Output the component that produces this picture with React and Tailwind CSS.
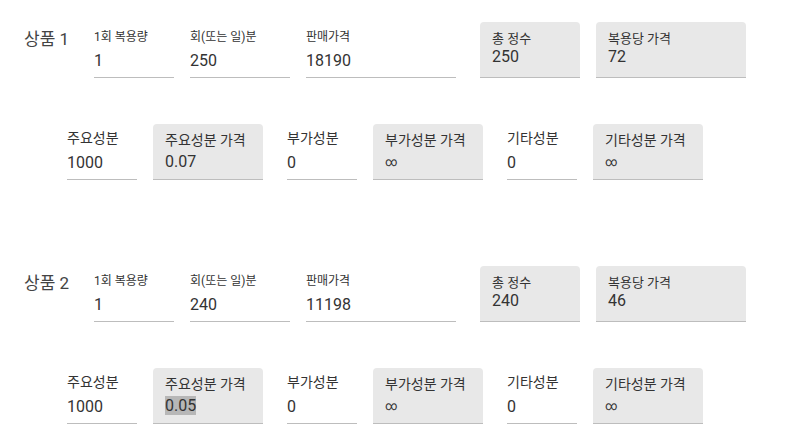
const FONT = "font-['Roboto','Noto_Sans_CJK_KR',sans-serif]";

const PRODUCTS = [
  {
    name: '상품 1',
    dose: '1', count: '250', price: '18190', total: '250', perDose: '72',
    main: '1000', mainPrice: '0.07', sub: '0', etc: '0',
  },
  {
    name: '상품 2',
    dose: '1', count: '240', price: '11198', total: '240', perDose: '46',
    main: '1000', mainPrice: '0.05', sub: '0', etc: '0', selected: true,
  },
];

/** Underlined text input (top row, small label). */
function Field({ label, value, className }) {
  return (
    <div className={`flex flex-col border-b border-[#bdbdbd] pb-[4px] ${className}`}>
      <span className="text-[12px] leading-4 text-[#333]">{label}</span>
      <span className="mt-1 text-[16px] leading-6 text-[#333]">{value}</span>
    </div>
  );
}

/** Underlined text input (second row, larger label). */
function FieldLg({ label, value, className }) {
  return (
    <div className={`flex flex-col border-b border-[#bdbdbd] pb-[4px] ${className}`}>
      <span className="text-[14px] leading-5 text-[#333]">{label}</span>
      <span className="mt-[3px] text-[16px] leading-6 text-[#333]">{value}</span>
    </div>
  );
}

/** Filled read-only box. */
function Box({ label, value, className, large, selected }) {
  const infinite = value === '∞';
  return (
    <div
      className={`flex h-[56px] flex-col rounded-t-[4px] border-b border-[#bdbdbd] bg-[#e8e8e8] px-3 ${
        large ? 'pt-[6px]' : 'pt-[9px]'
      } ${className}`}
    >
      <span className={`${large ? 'text-[14px] leading-5' : 'text-[13px] leading-4'} text-[#333]`}>{label}</span>
      <span
        className={`${infinite ? 'text-[12px] pt-[2px]' : 'text-[16px]'} ${
          large && !infinite ? 'mt-[2px]' : ''
        } leading-5 text-[#333]`}
      >
        {selected ? <span className="bg-[#b7b7b7]">{value}</span> : value}
      </span>
    </div>
  );
}

function Product({ p, first }) {
  return (
    <div className={first ? '' : 'mt-[86px]'}>
      <div className="flex h-[56px] items-end">
        <div className="mt-[5px] w-[70px] self-start text-[17px] leading-6 text-[#444]">{p.name}</div>
        <Field label="1회 복용량" value={p.dose} className="w-[80px]" />
        <Field label="회(또는 일)분" value={p.count} className="ml-4 w-[100px]" />
        <Field label="판매가격" value={p.price} className="ml-4 w-[150px]" />
        <Box label="총 정수" value={p.total} className="ml-6 w-[100px]" />
        <Box label="복용당 가격" value={p.perDose} className="ml-4 w-[150px]" />
      </div>
      <div className="mt-[46px] flex h-[56px] items-end pl-[43px]">
        <FieldLg label="주요성분" value={p.main} className="w-[70px]" />
        <Box label="주요성분 가격" value={p.mainPrice} className="ml-4 w-[110px]" large selected={p.selected} />
        <FieldLg label="부가성분" value={p.sub} className="ml-6 w-[70px]" />
        <Box label="부가성분 가격" value="∞" className="ml-4 w-[110px]" large />
        <FieldLg label="기타성분" value={p.etc} className="ml-6 w-[70px]" />
        <Box label="기타성분 가격" value="∞" className="ml-4 w-[110px]" large />
      </div>
    </div>
  );
}

export default function App() {
  return (
    <div className={`min-h-[448px] w-[786px] bg-white px-6 pt-[22px] ${FONT}`}>
      {PRODUCTS.map((p, i) => (
        <Product key={p.name} p={p} first={i === 0} />
      ))}
    </div>
  );
}
